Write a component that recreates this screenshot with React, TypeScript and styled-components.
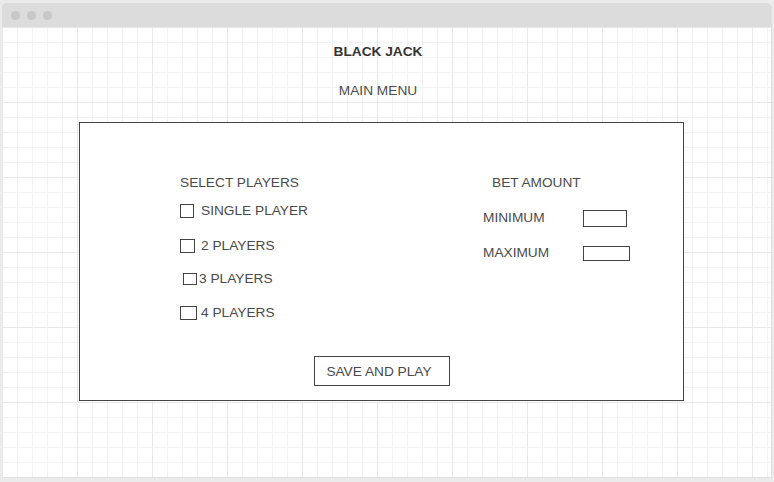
import React from "react";
import styled, { createGlobalStyle } from "styled-components";

const Global = createGlobalStyle`
  html, body { margin: 0; padding: 0; background: #ebebeb; }
  body { font-family: "Liberation Sans", Arial, sans-serif; }
  * { box-sizing: border-box; }
`;

const Page = styled.div`
  width: 774px;
  height: 482px;
  padding: 3px 2px 0 2px;
`;

const Window = styled.div`
  width: 769px;
  height: 474px;
  border-radius: 4px 4px 0 0;
  overflow: hidden;
  background: #fff;
  display: flex;
  flex-direction: column;
  box-shadow: 1px 1px 0 #e0e0e0;
`;

const TitleBar = styled.div`
  height: 24px;
  flex: none;
  background: #dcdcdc;
  display: flex;
  align-items: center;
  gap: 7px;
  padding-left: 9px;
`;

const Dot = styled.span`
  width: 9px;
  height: 9px;
  border-radius: 50%;
  background: #c7c7c7;
`;

const Canvas = styled.div`
  flex: 1;
  display: flex;
  flex-direction: column;
  background-color: #fff;
  background-image:
    linear-gradient(to right, #e8e8e8 1px, transparent 1px),
    linear-gradient(to bottom, #e8e8e8 1px, transparent 1px),
    linear-gradient(to right, #f2f2f2 1px, transparent 1px),
    linear-gradient(to bottom, #f2f2f2 1px, transparent 1px);
  background-size: 75px 75px, 75px 75px, 15px 15px, 15px 15px;
  background-position: 0 0;
`;

const Header = styled.div`
  width: 752px;
  text-align: center;
  color: #333;
  font-size: 13.7px;
  line-height: 16px;
`;

const Title = styled(Header)`
  margin-top: 17px;
  font-weight: bold;
`;

const Subtitle = styled(Header)`
  margin-top: 23px;
  color: #4a4a4a;
`;

const Panel = styled.div`
  margin: 23px 0 0 77px;
  width: 605px;
  height: 279px;
  border: 1px solid #444;
  background: #fff;
  display: flex;
  flex-direction: column;
  padding-top: 52px;
`;

const Columns = styled.div`
  display: flex;
`;

const LeftCol = styled.div`
  margin-left: 100px;
  width: 303px;
  display: flex;
  flex-direction: column;
`;

const RightCol = styled.div`
  display: flex;
  flex-direction: column;
`;

const Label = styled.div<{ $indent?: number }>`
  font-size: 13.7px;
  line-height: 16px;
  color: #4a4a4a;
  white-space: nowrap;
  padding-left: ${(p) => p.$indent ?? 0}px;
`;

const Row = styled.div<{ $top: number }>`
  display: flex;
  align-items: center;
  height: 16px;
  margin-top: ${(p) => p.$top}px;
`;

const Check = styled.span<{ $w: number; $h: number; $ml: number; $mr: number }>`
  flex: none;
  width: ${(p) => p.$w}px;
  height: ${(p) => p.$h}px;
  margin-left: ${(p) => p.$ml}px;
  margin-right: ${(p) => p.$mr}px;
  border: 1px solid #444;
  background: #fff;
`;

const FieldLabel = styled(Label)`
  width: 100px;
`;

const Field = styled.span<{ $w: number; $h: number }>`
  width: ${(p) => p.$w}px;
  height: ${(p) => p.$h}px;
  border: 1px solid #444;
  background: #fff;
`;

const Button = styled.div`
  align-self: center;
  margin: 35px 0 0 1px;
  width: 136px;
  height: 30px;
  border: 1px solid #444;
  display: flex;
  align-items: center;
  justify-content: center;
  padding-right: 6px;
  font-size: 13.7px;
  color: #4a4a4a;
`;

const players = [
  { label: "SINGLE PLAYER", top: 12, w: 14, h: 14, ml: 0, mr: 7 },
  { label: "2 PLAYERS", top: 19, w: 15, h: 14, ml: 0, mr: 6 },
  { label: "3 PLAYERS", top: 17, w: 14, h: 12, ml: 3, mr: 2 },
  { label: "4 PLAYERS", top: 18, w: 17, h: 14, ml: 0, mr: 4 },
];

export default function App() {
  return (
    <Page>
      <Global />
      <Window>
        <TitleBar>
          <Dot />
          <Dot />
          <Dot />
        </TitleBar>
        <Canvas>
          <Title>BLACK JACK</Title>
          <Subtitle>MAIN MENU</Subtitle>
          <Panel>
            <Columns>
              <LeftCol>
                <Label>SELECT PLAYERS</Label>
                {players.map((p) => (
                  <Row key={p.label} $top={p.top}>
                    <Check $w={p.w} $h={p.h} $ml={p.ml} $mr={p.mr} />
                    <Label>{p.label}</Label>
                  </Row>
                ))}
              </LeftCol>
              <RightCol>
                <Label $indent={9}>BET AMOUNT</Label>
                <Row $top={19}>
                  <FieldLabel>MINIMUM</FieldLabel>
                  <Field $w={44} $h={17} />
                </Row>
                <Row $top={19}>
                  <FieldLabel>MAXIMUM</FieldLabel>
                  <Field $w={47} $h={15} />
                </Row>
              </RightCol>
            </Columns>
            <Button>SAVE AND PLAY</Button>
          </Panel>
        </Canvas>
      </Window>
    </Page>
  );
}
